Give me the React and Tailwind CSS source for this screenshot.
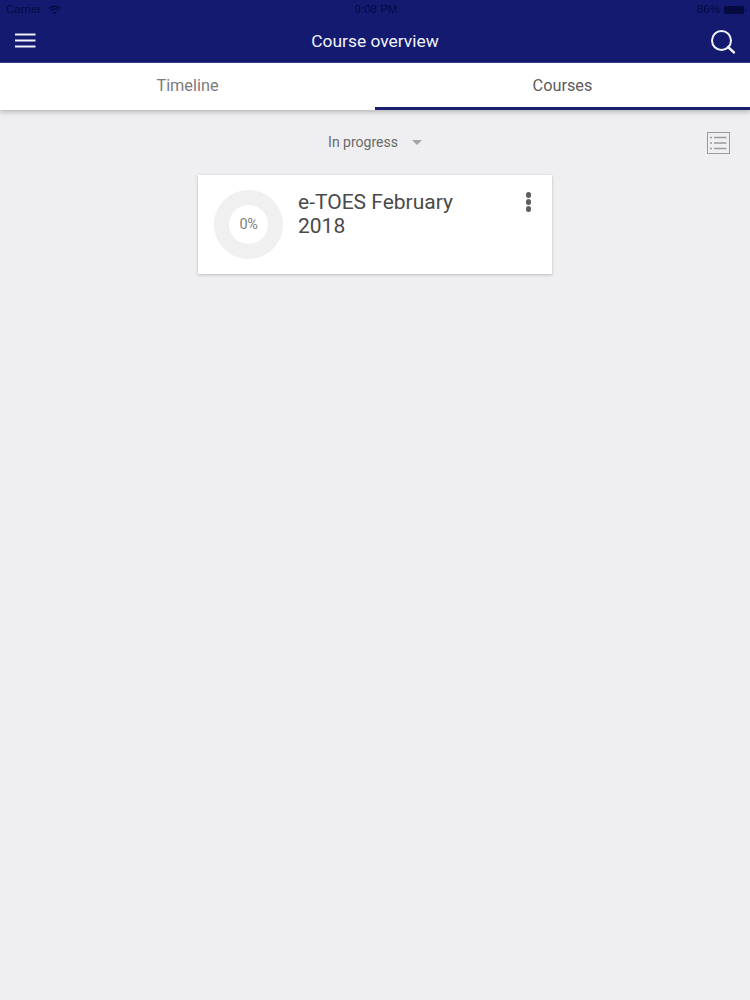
import React from 'react';

const font = { fontFamily: 'Roboto, sans-serif' };

const StatusBar = () => (
  <div className="h-[20px] flex items-center justify-between pl-[6px] pr-[4px] text-[11.5px] text-[#060b3f] font-['Liberation_Sans',sans-serif] blur-[0.5px]">
    <div className="flex items-center gap-[7px] w-[200px]">
      <span>Carrier</span>
      <svg width="13" height="10" viewBox="0 0 13 10" fill="none" stroke="#060b3f" strokeWidth="1.3">
        <path d="M0.8 3.4C4 .6 9 .6 12.2 3.4" />
        <path d="M2.8 5.4C5 3.6 8 3.6 10.2 5.4" />
        <path d="M6.5 9.2 4.6 7.2C5.8 6.3 7.2 6.3 8.4 7.2Z" fill="#060b3f" stroke="none" />
      </svg>
    </div>
    <span>9:08 PM</span>
    <div className="flex items-center justify-end gap-[4px] w-[200px]">
      <span>86%</span>
      <div className="flex items-center gap-[1px]">
        <div className="w-[20px] h-[8px] bg-[#060b3f] rounded-[1px]" />
        <div className="w-[1px] h-[3px] bg-[#060b3f]" />
      </div>
    </div>
  </div>
);

const Header = () => (
  <div className="h-[43px] relative flex items-center justify-center">
    <svg className="absolute left-[15px] top-[13px]" width="21" height="15" viewBox="0 0 21 15" fill="none" stroke="#eef0fa" strokeWidth="2">
      <path d="M0 1.5h20.5M0 7.5h20.5M0 13.5h20.5" />
    </svg>
    <span className="text-[17.4px] text-[#f2f3fa]">Course overview</span>
    <svg className="absolute left-[711px] top-[10px]" width="26" height="26" viewBox="0 0 26 26" fill="none" stroke="#f2f3fa" strokeWidth="2">
      <circle cx="10.5" cy="10.5" r="9.5" />
      <path d="M17 17l6 5.5" strokeLinecap="round" strokeWidth="2.4" />
    </svg>
  </div>
);

const Tabs = () => (
  <div className="h-[47px] bg-white flex shadow-[0_2px_5px_rgba(0,0,0,0.25)] relative">
    <div className="w-1/2 flex items-center justify-center text-[16.3px] text-[#7b7b7b]">Timeline</div>
    <div className="w-1/2 flex items-center justify-center text-[16.3px] text-[#5c5c5c] pt-[2px] border-b-[3px] border-b-[#1a1f70]">Courses</div>
  </div>
);

const FilterRow = () => (
  <div className="h-[65px] relative flex items-center justify-center">
    <div className="flex items-center gap-[14px]">
      <span className="text-[14px] text-[#6a6a6a]">In progress</span>
      <div className="w-0 h-0 border-x-[5px] border-x-transparent border-t-[5px] border-t-[#a5a5a5]" />
    </div>
    <svg className="absolute left-[707px] top-[21px]" width="24" height="24" viewBox="0 0 24 24" fill="none" stroke="#9a9a9a" strokeWidth="1">
      <rect x="0.5" y="1.5" width="22" height="21" />
      <path d="M7 6.5h12.5M7 12h12.5M7 17.5h12.5" strokeWidth="1.3" />
      <path d="M3 6.5h2M3 12h2M3 17.5h2" strokeWidth="1.3" />
    </svg>
  </div>
);

const CourseCard = () => (
  <div className="w-[354px] h-[99px] mx-auto bg-white shadow-[0_1px_3px_rgba(0,0,0,0.22)] flex pl-[16px] pt-[15px] pr-[21px]">
    <div className="w-[69px] h-[69px] rounded-full border-[15px] border-[#f0f0f0] flex items-center justify-center shrink-0">
      <span className="text-[14.5px] text-[#808080] tracking-[-0.5px]">0%</span>
    </div>
    <div className="ml-[15px] w-[180px] text-[21px] leading-[24px] text-[#4a4a4a]">e-TOES February 2018</div>
    <div className="ml-auto flex flex-col gap-[1.5px] pt-[2px]">
      <div className="w-[5.5px] h-[5.5px] rounded-full bg-[#5e5e5e]" />
      <div className="w-[5.5px] h-[5.5px] rounded-full bg-[#5e5e5e]" />
      <div className="w-[5.5px] h-[5.5px] rounded-full bg-[#5e5e5e]" />
    </div>
  </div>
);

export default function App() {
  return (
    <div className="w-[750px] h-[1000px] bg-[#efeff1] overflow-hidden" style={font}>
      <div className="bg-[#131a70] border-b border-b-[#3a3f8f]">
        <div className="-mb-[1px]">
          <StatusBar />
          <Header />
        </div>
      </div>
      <Tabs />
      <FilterRow />
      <CourseCard />
    </div>
  );
}
